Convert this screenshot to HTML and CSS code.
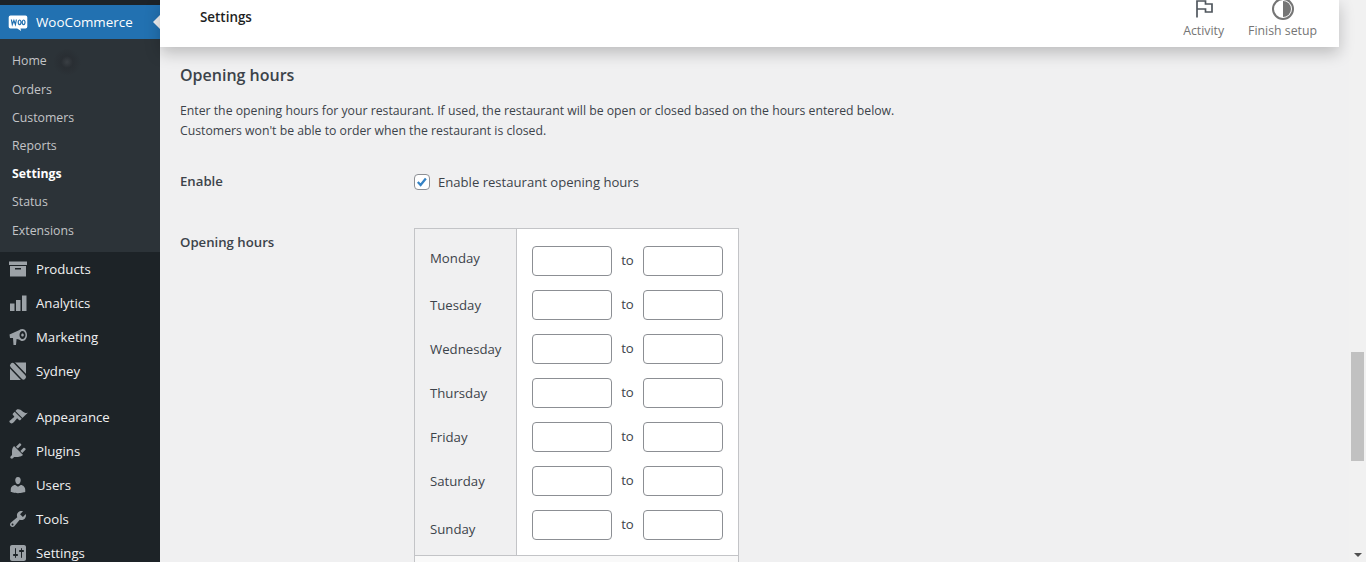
FILE: index.html
```html
<!DOCTYPE html>
<html lang="en">
<head>
<meta charset="utf-8">
<title>Settings</title>
<link rel="stylesheet" href="styles.css">
</head>
<body>
<div class="page">
  <nav class="sidebar">
    <div class="woo-row">
      <svg class="woo-logo" viewBox="0 0 20 20"><path fill="#fff" d="M2.5 3.5h15a1.8 1.8 0 0 1 1.8 1.8v9.4a1.8 1.8 0 0 1-1.8 1.8h-5l.6 2.6-3.9-2.6H2.5a1.8 1.8 0 0 1-1.8-1.8V5.3a1.8 1.8 0 0 1 1.8-1.8z"/><path fill="none" stroke="#2271b1" stroke-width="1.2" d="M3.4 7.5l.9 5 1.6-4 1.5 4 1-5M11.6 8a1.4 2.3 0 1 0 .02 0zM15.6 8a1.4 2.3 0 1 0 .02 0z"/></svg>
      <span>WooCommerce</span>
      <i class="woo-arrow"></i>
    </div>
    <ul class="submenu">
      <li>Home<i class="smudge"></i></li>
      <li>Orders</li>
      <li>Customers</li>
      <li>Reports</li>
      <li class="current">Settings</li>
      <li>Status</li>
      <li>Extensions</li>
    </ul>
    <ul class="menu">
      <li><svg viewBox="0 0 20 20"><path d="M1 2.5h18V6H1zM2 7h16v10.5H2zm5 2v1.4h6V9z" fill-rule="evenodd"/></svg>Products</li>
      <li><svg viewBox="0 0 20 20"><path d="M2 10.5h4.5V18H2zM8 7h4.5v11H8zM14 2.5h4.5V18H14z"/></svg>Analytics</li>
      <li><svg viewBox="0 0 20 20"><path fill-rule="evenodd" d="M1.5 7.5L11 3.2C12 2.4 13.2 2 14.5 2 17 2 19 4.8 19 8s-2 6-4.5 6c-1.5 0-2.5-.6-3.5-1.5L8.6 12 8 18H5.5L5 11H2zM14.5 4c-1.7 0-3 1.8-3 4s1.3 4 3 4 3-1.8 3-4-1.3-4-3-4zm0 2.4c.7 0 1.3.7 1.3 1.6s-.6 1.6-1.3 1.6-1.3-.7-1.3-1.6.6-1.6 1.3-1.6z"/></svg>Marketing</li>
      <li><svg viewBox="0 0 20 20"><rect x="2" y="1.5" width="16" height="17.5"/><path d="M4.5 4.5L15.5 16" class="band-out"/><path d="M4.5 4.5L15.5 16" class="band-in"/></svg>Sydney</li>
      <li class="gap"><svg viewBox="0 0 20 20"><path d="M14.48 11.06L7.41 3.99l1.5-1.5c.5-.56 2.3-.47 3.51.32 1.21.8 1.43 1.28 2.91 2.1 1.18.64 2.45 1.26 4.45.85zm-.71.71L6.7 4.7 4.93 6.47c-.39.39-.39 1.02 0 1.41l1.06 1.06c.39.39.39 1.03 0 1.42-.6.6-1.43 1.11-2.21 1.69-.35.26-.7.53-1.01.84C1.43 13.23.76 14.4 2.12 15.77c1.36 1.36 2.54.69 3.88-.65.31-.31.58-.66.85-1.02.57-.78 1.08-1.61 1.69-2.21.39-.39 1.02-.39 1.41 0l1.06 1.06c.39.39 1.02.39 1.41 0z"/></svg>Appearance</li>
      <li><svg viewBox="0 0 20 20"><path d="M13.11 4.36L9.87 7.6 8 5.73l3.24-3.24c.35-.34 1.05-.2 1.56.32.52.51.66 1.21.31 1.55zm-8 1.77l.91-1.12 9.01 9.01-1.19.84c-.71.71-2.63 1.16-3.82 1.16H6.14L4.9 17.26c-.59.59-1.54.59-2.12 0-.59-.58-.59-1.53 0-2.12l1.24-1.24v-3.88c0-1.13.4-3.19 1.09-3.89zm7.26 3.97l3.24-3.24c.34-.35 1.04-.21 1.55.31.52.51.66 1.21.31 1.55l-3.24 3.25z"/></svg>Plugins</li>
      <li><svg viewBox="0 0 20 20"><path d="M10 9.25c-2.27 0-2.73-3.44-2.73-3.44C7 4.02 7.82 2 9.97 2c2.16 0 2.98 2.02 2.71 3.81 0 0-.41 3.44-2.68 3.44zm0 2.57L12.72 10c2.39 0 4.52 2.33 4.52 4.53v2.49s-3.65 1.13-7.24 1.13c-3.65 0-7.24-1.13-7.24-1.13v-2.49c0-2.25 1.94-4.48 4.47-4.48z"/></svg>Users</li>
      <li><svg viewBox="0 0 20 20"><path d="M16.68 9.77c-1.34 1.34-3.3 1.67-4.95.99l-5.41 6.52c-.99.99-2.59.99-3.58 0s-.99-2.59 0-3.57l6.52-5.42c-.68-1.65-.35-3.61.99-4.95 1.28-1.28 3.12-1.62 4.72-1.06l-2.89 2.89 2.82 2.82 2.86-2.87c.53 1.58.18 3.39-1.08 4.65zM3.81 16.21c.4.39 1.04.39 1.43 0 .4-.4.4-1.04 0-1.43-.39-.4-1.03-.4-1.43 0-.39.39-.39 1.03 0 1.43z"/></svg>Tools</li>
      <li><svg viewBox="0 0 20 20"><path d="M18 16V4c0-1.1-.9-2-2-2H4c-1.1 0-2 .9-2 2v12c0 1.1.9 2 2 2h12c1.1 0 2-.9 2-2zM8 11h1c.55 0 1 .45 1 1s-.45 1-1 1H8v1.5c0 .28-.22.5-.5.5s-.5-.22-.5-.5V13H6c-.55 0-1-.45-1-1s.45-1 1-1h1V5.5c0-.28.22-.5.5-.5s.5.22.5.5V11zm5-2h-1c-.55 0-1-.45-1-1s.45-1 1-1h1V5.5c0-.28.22-.5.5-.5s.5.22.5.5V7h1c.55 0 1 .45 1 1s-.45 1-1 1h-1v5.5c0 .28-.22.5-.5.5s-.5-.22-.5-.5V9z"/></svg>Settings</li>
    </ul>
  </nav>

  <main class="main">
    <header class="topbar">
      <h1>Settings</h1>
      <div class="top-actions">
        <div class="action activity">
          <svg viewBox="0 0 24 24" class="action-icon"><path fill="none" stroke="#50575e" stroke-width="1.7" d="M5 20.5V4h8.5v3H20v8h-6.5v-3H5"/></svg>
          <span>Activity</span>
        </div>
        <div class="action finish">
          <svg viewBox="0 0 24 24" class="action-icon"><circle cx="12" cy="12" r="10" fill="none" stroke="#757575" stroke-width="2"/><path fill="#757575" d="M12 4a8 8 0 0 1 0 16z"/></svg>
          <span>Finish setup</span>
        </div>
      </div>
    </header>

    <section class="content">
      <h2>Opening hours</h2>
      <p class="intro">Enter the opening hours for your restaurant. If used, the restaurant will be open or closed based on the hours entered below.<br>Customers won't be able to order when the restaurant is closed.</p>

      <div class="field enable">
        <div class="field-label">Enable</div>
        <label class="check-label"><span class="checkbox"><svg viewBox="0 0 16 16"><path fill="none" stroke="#3582c4" stroke-width="2.6" d="M3.2 8l3.2 3.4 6-7.4"/></svg></span>Enable restaurant opening hours</label>
      </div>

      <div class="field hours">
        <div class="field-label">Opening hours</div>
        <div class="hours-box">
          <table class="hours-table">
            <tr class="first"><th>Monday</th><td><span class="time"></span><span class="to">to</span><span class="time"></span></td></tr>
            <tr><th>Tuesday</th><td><span class="time"></span><span class="to">to</span><span class="time"></span></td></tr>
            <tr><th>Wednesday</th><td><span class="time"></span><span class="to">to</span><span class="time"></span></td></tr>
            <tr><th>Thursday</th><td><span class="time"></span><span class="to">to</span><span class="time"></span></td></tr>
            <tr><th>Friday</th><td><span class="time"></span><span class="to">to</span><span class="time"></span></td></tr>
            <tr><th>Saturday</th><td><span class="time"></span><span class="to">to</span><span class="time"></span></td></tr>
            <tr class="last"><th>Sunday</th><td><span class="time"></span><span class="to">to</span><span class="time"></span></td></tr>
          </table>
          <div class="hours-foot"></div>
        </div>
      </div>
    </section>
  </main>

  <div class="scrollbar">
    <i class="arrow-up"></i>
    <div class="track"><div class="thumb"></div></div>
    <i class="arrow-down"></i>
  </div>
</div>
</body>
</html>
```

FILE: styles.css
```css
* { box-sizing: border-box; }
html, body { margin: 0; height: 100%; overflow: hidden; }
body { font-family: "Open Sans", "Noto Sans", sans-serif; font-size: 13px; color: #3c434a; background: #f0f0f1; }
.page { display: flex; height: 562px; overflow: hidden; }

.sidebar { flex: 0 0 160px; height: 562px; background: #1d2327; padding-top: 5px; color: #f0f0f1; overflow: hidden; }
.woo-row { position: relative; height: 34px; background: #2271b1; color: #fff; display: flex; align-items: center; gap: 8px; padding-left: 8px; font-size: 13.4px; }
.woo-logo { width: 20px; height: 20px; }
.woo-arrow { position: absolute; right: 0; top: 10px; border: 7px solid transparent; border-right-color: #f0f0f1; border-left-width: 0; }
ul { list-style: none; margin: 0; padding: 0; }
.submenu { background: #2c3338; height: 213px; padding-top: 9px; }
.submenu li { position: relative; height: 28.1px; line-height: 28px; padding-left: 12px; color: #c3c4c7; font-size: 12.3px; }
.submenu li:first-child { line-height: 26px; }
.submenu li.current { color: #fff; font-weight: 700; }
.smudge { position: absolute; left: 52px; top: 1px; width: 30px; height: 26px; border-radius: 50%; background: radial-gradient(circle, #3a3f44 0, #292e33 30%, #2c3338 70%); }
.menu li { height: 34px; display: flex; align-items: center; gap: 8px; padding-left: 8px; color: #f0f0f1; font-size: 13.2px; }
.menu li.gap { margin-top: 12px; }
.menu svg { width: 20px; height: 20px; fill: #9ca2a7; flex: none; }
.band-out { fill: none; stroke: #1d2327; stroke-width: 8; stroke-linecap: round; }
.band-in { fill: none; stroke: #9ca2a7; stroke-width: 5; stroke-linecap: round; }

.main { flex: 1; min-width: 0; position: relative; margin-right: 10px; }
.topbar { position: relative; height: 47px; background: #fff; display: flex; justify-content: space-between; box-shadow: 0 6px 16px rgba(0,0,0,.22); }
h1 { margin: 0; padding: 8px 0 0 40px; font-size: 13.4px; font-weight: 600; line-height: 18px; color: #1e1e1e; }
.top-actions { display: flex; overflow: hidden; height: 47px; }
.action { display: flex; flex-direction: column; align-items: center; color: #757575; font-size: 12.3px; line-height: 16px; margin-top: -3px; }
.action-icon { width: 24px; height: 24px; margin-bottom: 2px; }
.activity { margin-right: 24px; }
.finish { margin-right: 22px; }

.content { padding: 18px 0 0 20px; }
h2 { margin: 0; font-size: 16px; font-weight: 600; line-height: 21px; color: #3c434a; }
.intro { margin: 15px 0 0; line-height: 20px; font-size: 12.25px; }
.field { display: flex; }
.field-label { flex: 0 0 234px; font-weight: 600; font-size: 13.2px; }
.enable { margin-top: 32px; align-items: center; height: 18px; }
.enable .field-label { margin-top: -2px; }
.check-label { display: flex; align-items: center; gap: 8px; font-size: 13.1px; }
.checkbox { width: 16px; height: 16px; border: 1px solid #8c8f94; border-radius: 4px; background: #fff; display: block; }
.checkbox svg { display: block; width: 14px; height: 14px; }
.hours { margin-top: 37px; }
.hours .field-label { padding-top: 5px; }
.hours-box { width: 325px; border: 1px solid #c3c4c7; background: #fff; }
.hours-table { border-collapse: collapse; width: 100%; }
.hours-table th { width: 102px; padding: 0 0 0 15px; background: #f0f0f1; border-right: 1px solid #c3c4c7; text-align: left; font-weight: 400; font-size: 13.2px; vertical-align: middle; }
.hours-table td { padding: 7px 15px 7px 15px; height: 44px; white-space: nowrap; font-size: 0; vertical-align: middle; }
.hours-table .first td { padding-top: 17px; height: 54px; }
.hours-table .first th { padding-top: 4px; }
.hours-table .last td { padding-bottom: 15px; height: 52px; }
.time { display: inline-block; vertical-align: middle; width: 80px; height: 30px; background: #fff; border: 1px solid #8c8f94; border-radius: 4px; }
.to { display: inline-block; vertical-align: middle; width: 31px; text-align: center; font-size: 13.2px; line-height: 26px; padding-bottom: 2px; }
.hours-foot { height: 60px; background: #f9f9f9; border-top: 1px solid #c3c4c7; }

.scrollbar { flex: 0 0 17px; height: 562px; background: #f1f1f1; display: flex; flex-direction: column; align-items: center; }
.track { flex: 1; width: 100%; position: relative; }
.thumb { position: absolute; top: 352px; left: 2px; width: 13px; height: 109px; background: #c1c1c1; }
.arrow-up { height: 0; }
.arrow-down { width: 0; height: 0; margin-bottom: 5px; border: 4px solid transparent; border-top: 4px solid #505050; border-bottom-width: 0; }
```
